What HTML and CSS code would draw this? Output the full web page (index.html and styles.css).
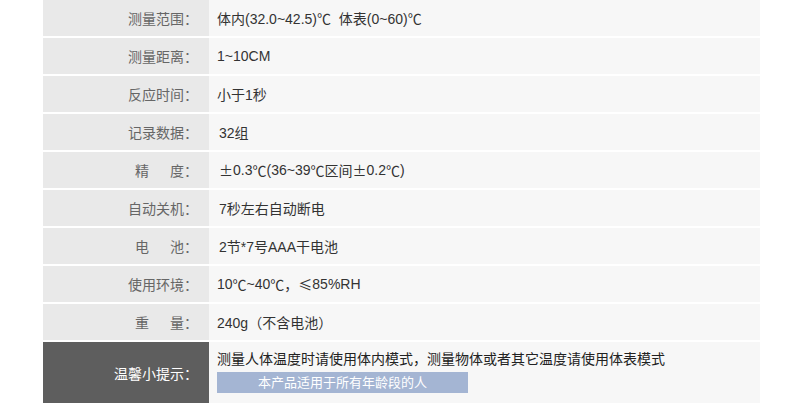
FILE: index.html
```html
<!DOCTYPE html>
<html lang="zh-CN">
<head>
<meta charset="UTF-8">
<title>产品参数</title>
<link rel="stylesheet" href="styles.css">
</head>
<body>
<div class="spec-table">
  <div class="row">
    <div class="label">测量范围：</div>
    <div class="value">体内(32.0~42.5)<span class="sym">℃</span>&nbsp; 体表(0~60)<span class="sym">℃</span></div>
  </div>
  <div class="row">
    <div class="label">测量距离：</div>
    <div class="value">1~10CM</div>
  </div>
  <div class="row">
    <div class="label">反应时间：</div>
    <div class="value">小于1秒</div>
  </div>
  <div class="row">
    <div class="label">记录数据：</div>
    <div class="value indent">32组</div>
  </div>
  <div class="row">
    <div class="label">精&emsp;&ensp;度：</div>
    <div class="value indent"><span class="sym">±</span>0.3<span class="sym">℃</span>(36~39<span class="sym">℃</span>区间<span class="sym">±</span>0.2<span class="sym">℃</span>)</div>
  </div>
  <div class="row">
    <div class="label">自动关机：</div>
    <div class="value indent">7秒左右自动断电</div>
  </div>
  <div class="row">
    <div class="label">电&emsp;&ensp;池：</div>
    <div class="value indent">2节*7号AAA干电池</div>
  </div>
  <div class="row">
    <div class="label">使用环境：</div>
    <div class="value">10<span class="sym">℃</span>~40<span class="sym">℃</span>，<span class="sym">≤</span>85%RH</div>
  </div>
  <div class="row">
    <div class="label">重&emsp;&ensp;量：</div>
    <div class="value">240g（不含电池）</div>
  </div>
  <div class="row tip">
    <div class="label">温馨小提示：</div>
    <div class="value">
      <div class="tip-text">测量人体温度时请使用体内模式，测量物体或者其它温度请使用体表模式</div>
      <div class="tip-badge">本产品适用于所有年龄段的人</div>
    </div>
  </div>
</div>
</body>
</html>
```

FILE: styles.css
```css
body {
  margin: 0;
  background: #fff;
  font-family: "Liberation Sans", "Noto Sans CJK SC", sans-serif;
  font-size: 14px;
}
.spec-table {
  width: 717px;
  margin-left: 43px;
}
.row {
  display: grid;
  grid-template-columns: 166px 1fr;
  height: 36px;
  border-bottom: 2px solid #fff;
}
.label {
  background: #e9e9e9;
  color: #666;
  text-align: right;
  padding-right: 11px;
  display: flex;
  align-items: center;
  justify-content: flex-end;
}
.value {
  background: #f7f7f7;
  color: #333;
  padding-left: 8px;
  display: flex;
  align-items: center;
  white-space: pre;
}
.value.indent {
  padding-left: 10px;
}
.sym {
  font-family: "Noto Sans CJK SC", sans-serif;
}
.row.tip {
  height: 61px;
  border-bottom: none;
}
.tip .label {
  background: #5e5e5e;
  color: #fff;
  padding-top: 1px;
}
.tip .value {
  flex-direction: column;
  align-items: flex-start;
  justify-content: flex-start;
  padding-top: 7px;
  white-space: normal;
}
.tip-text {
  line-height: 20px;
  color: #222;
}
.tip-badge {
  margin-top: 3px;
  width: 251px;
  height: 21px;
  line-height: 21px;
  background: #a4b5d3;
  color: #fff;
  font-size: 13px;
  text-align: center;
}
```
